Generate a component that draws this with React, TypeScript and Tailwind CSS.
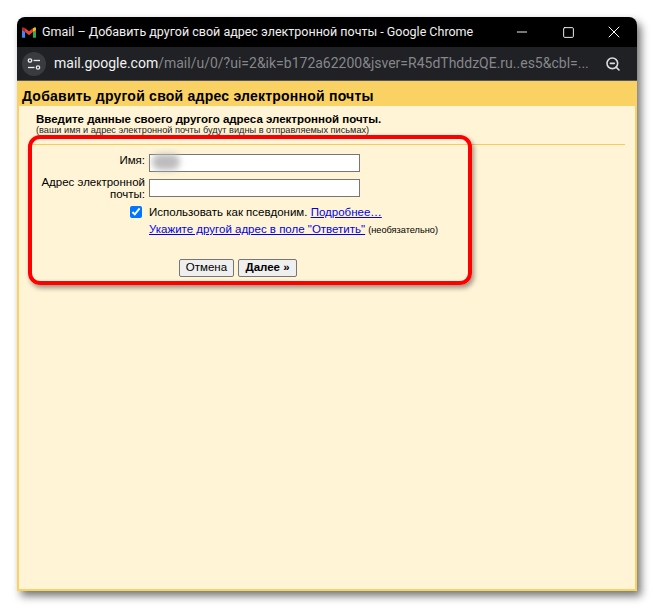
import { Minus, Square, X, ZoomOut } from "lucide-react";

function GmailLogo() {
  return (
    <svg width="14" height="11" viewBox="0 0 16 12" className="shrink-0">
      <path d="M0 2.5 V11 Q0 12 1 12 H3.5 V5 Z" fill="#4285f4" />
      <path d="M16 2.5 V11 Q16 12 15 12 H12.5 V5 Z" fill="#34a853" />
      <path d="M12.5 1 L12.5 5.5 L16 3 V1.5 Q16 -0.4 14 0.2 Z" fill="#fbbc04" />
      <path d="M3.5 1 L8 4.6 L12.5 1 V5.5 L8 9 L3.5 5.5 Z" fill="#ea4335" />
      <path d="M0 3 L3.5 5.5 V1 L2 0.2 Q0 -0.4 0 1.5 Z" fill="#c5221f" />
    </svg>
  );
}

function TuneIcon() {
  return (
    <svg width="14" height="14" viewBox="0 0 14 14" fill="none" stroke="#e8eaed" strokeWidth="1.3">
      <circle cx="3" cy="3.5" r="1.7" />
      <path d="M6.5 3.5 H13" />
      <circle cx="11" cy="10.5" r="1.7" />
      <path d="M1 10.5 H7.5" />
    </svg>
  );
}

export default function App() {
  return (
    <div className="w-[654px] h-[608px] bg-white pt-[17px] pl-[17px] font-['Liberation_Sans',Arial,sans-serif]">
      <div className="relative w-[620px] h-[574px] flex flex-col rounded-t-lg overflow-visible shadow-[4px_5px_9px_rgba(0,0,0,0.55)]">
        <div className="h-[30px] bg-black rounded-t-lg flex items-center pl-[5px] shrink-0 font-['Roboto',sans-serif]">
          <GmailLogo />
          <span className="ml-[6px] flex-1 text-[12.5px] text-[#f1f1f1] whitespace-nowrap">
            Gmail – Добавить другой свой адрес электронной почты - Google Chrome
          </span>
          <div className="w-[46px] flex justify-center"><Minus size={16} className="text-white" strokeWidth={1.4} /></div>
          <div className="w-[46px] flex justify-center"><Square size={13} className="text-white" strokeWidth={1.7} /></div>
          <div className="w-[46px] flex justify-center"><X size={20} className="text-white" strokeWidth={1.2} /></div>
        </div>
        <div className="h-[34px] bg-[#202124] flex items-center pl-[5px] pr-[16px] shrink-0 border-b border-[#55565a] font-['Roboto',sans-serif]">
          <div className="w-6 h-6 rounded-full bg-[#3a3b3e] flex items-center justify-center shrink-0">
            <TuneIcon />
          </div>
          <span className="ml-2 flex-1 text-[14px] whitespace-nowrap text-[#85878b]">
            <span className="text-[#f1f3f4]">mail.google.com</span>/mail/u/0/?ui=2&amp;ik=b172a62200&amp;jsver=R45dThddzQE.ru..es5&amp;cbl=...
          </span>
          <ZoomOut size={16} className="text-[#dadce0]" strokeWidth={2.4} />
        </div>
        <div className="flex-1 bg-[#fad163] px-[2px] pb-[2px] flex flex-col min-h-0">
          <h1 className="h-[25px] shrink-0 pl-[3px] pt-[7px] text-[14px] leading-4 font-bold tracking-[0.23px] text-black whitespace-nowrap">
            Добавить другой свой адрес электронной почты
          </h1>
          <div className="flex-1 bg-[#fff4d6] text-black pt-[7px]">
            <div className="pl-[17px] text-[11.5px] leading-[13px] font-bold">
              Введите данные своего другого адреса электронной почты.
            </div>
            <div className="pl-[17px] text-[9.2px] leading-[9px] text-[#222]">
              (ваши имя и адрес электронной почты будут видны в отправляемых письмах)
            </div>
            <div className="ml-[9px] mr-[10px] mt-[9px] h-px bg-[#f8cb55]" />
            <div className="grid grid-cols-[126px_1fr] gap-x-[4px] mt-[9px] text-[11.5px] leading-[13px]">
              <label className="text-right">Имя:</label>
              <div className="relative w-[211px] h-[18px] bg-white border border-[#767676]">
                <div className="absolute left-[2px] top-[-1px] w-[28px] h-[16px] rounded-full bg-[#bdbdbd] blur-[3px]" />
              </div>
              <label className="text-right mt-[4px] leading-[12px]">Адрес электронной почты:</label>
              <div className="w-[211px] h-[18px] mt-[7px] bg-white border border-[#767676]" />
              <div className="flex justify-end pt-[6px]">
                <input type="checkbox" defaultChecked className="w-[12px] h-[12px] m-0 mr-[3px] accent-[#0075ff]" />
              </div>
              <div className="pt-[6px] whitespace-nowrap">
                Использовать как псевдоним. <a href="#" className="text-[#0000ee] underline">Подробнее…</a>
              </div>
              <div />
              <div className="pt-[4px] whitespace-nowrap">
                <a href="#" className="text-[#0000ee] underline">Укажите другой адрес в поле "Ответить"</a>
                <span className="ml-[3px] text-[9.2px]">(необязательно)</span>
              </div>
            </div>
            <div className="flex gap-[4px] ml-[160px] mt-[22px]">
              <button className="w-[55px] h-[18px] bg-[#efefef] border border-[#767676] rounded-[2px] text-[11.5px] leading-none text-black">Отмена</button>
              <button className="w-[59px] h-[18px] bg-[#efefef] border border-[#767676] rounded-[2px] text-[11.5px] leading-none font-bold text-black">Далее »</button>
            </div>
          </div>
        </div>
        <div className="absolute left-[11px] top-[118px] w-[444px] h-[150px] border-4 border-[#ff0000] rounded-[12px] shadow-[2px_3px_5px_rgba(0,0,0,0.4)] pointer-events-none" />
      </div>
    </div>
  );
}
